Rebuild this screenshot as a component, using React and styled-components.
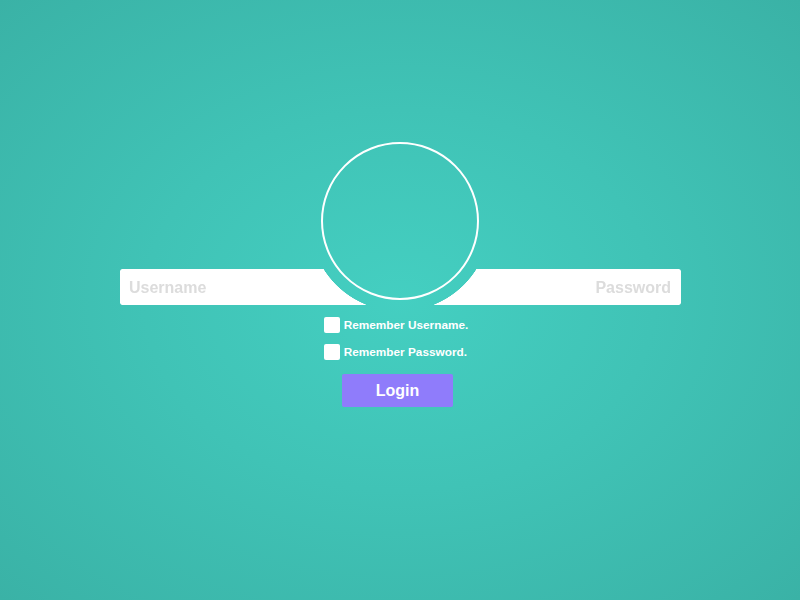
import React, { useState } from 'react';
import styled, { createGlobalStyle } from 'styled-components';

const GlobalStyle = createGlobalStyle`
  html, body {
    margin: 0;
    padding: 0;
    height: 100%;
  }
  body {
    font-family: "Liberation Sans", Arial, sans-serif;
    background: radial-gradient(ellipse at 50% 50%, #44cfc1 0%, #40c3b6 45%, #3ab2a6 100%);
    background-attachment: fixed;
  }
`;

const Page = styled.div`
  min-height: 100vh;
  display: flex;
  flex-direction: column;
  align-items: center;
  padding-top: 142px;
  box-sizing: border-box;
`;

const Avatar = styled.div`
  width: 154px;
  height: 154px;
  border: 2px solid #fff;
  border-radius: 50%;
  position: relative;
  z-index: 1;
`;

const Fields = styled.div`
  display: flex;
  width: 561px;
  height: 36px;
  margin-top: -31px;
  margin-left: 1px;
  border-radius: 2px;
  overflow: hidden;
  -webkit-mask-image: radial-gradient(circle at 280px -48px, transparent 90px, #000 90.6px);
  mask-image: radial-gradient(circle at 280px -48px, transparent 90px, #000 90.6px);
`;

const Field = styled.input`
  flex: 1;
  min-width: 0;
  border: none;
  outline: none;
  background: #fff;
  height: 36px;
  box-sizing: border-box;
  padding: 2px ${({ $right }) => ($right ? '10px' : '0')} 0 ${({ $right }) => ($right ? '0' : '9px')};
  text-align: ${({ $right }) => ($right ? 'right' : 'left')};
  font-family: "Liberation Sans", Arial, sans-serif;
  font-weight: bold;
  font-size: 16px;
  color: #555;

  &::placeholder {
    color: #dcdcdc;
  }
`;

const Options = styled.div`
  display: flex;
  flex-direction: column;
  gap: 11px;
  margin-top: 12px;
  margin-left: -8px;
`;

const Option = styled.label`
  display: flex;
  align-items: center;
  gap: 4px;
  color: #fff;
  font-size: 11.8px;
  font-weight: bold;
  cursor: pointer;
`;

const Box = styled.span`
  width: 16px;
  height: 16px;
  border-radius: 2px;
  background: #fff;
  display: flex;
  align-items: center;
  justify-content: center;
  color: #3ab2a6;
  font-size: 12px;
`;

const LoginButton = styled.button`
  margin-top: 14px;
  margin-left: -5px;
  width: 111px;
  height: 33px;
  border: none;
  border-radius: 2px;
  background: #8f7cfb;
  color: #fff;
  font-family: "Liberation Sans", Arial, sans-serif;
  font-weight: bold;
  font-size: 16px;
  cursor: pointer;
`;

function Check({ label, checked, onToggle }) {
  return (
    <Option onClick={onToggle}>
      <Box>{checked ? '✓' : ''}</Box>
      {label}
    </Option>
  );
}

export default function App() {
  const [rememberUser, setRememberUser] = useState(false);
  const [rememberPass, setRememberPass] = useState(false);

  return (
    <>
      <GlobalStyle />
      <Page>
        <Avatar />
        <Fields>
          <Field placeholder="Username" />
          <Field $right type="password" placeholder="Password" />
        </Fields>
        <Options>
          <Check
            label="Remember Username."
            checked={rememberUser}
            onToggle={() => setRememberUser(!rememberUser)}
          />
          <Check
            label="Remember Password."
            checked={rememberPass}
            onToggle={() => setRememberPass(!rememberPass)}
          />
        </Options>
        <LoginButton>Login</LoginButton>
      </Page>
    </>
  );
}
